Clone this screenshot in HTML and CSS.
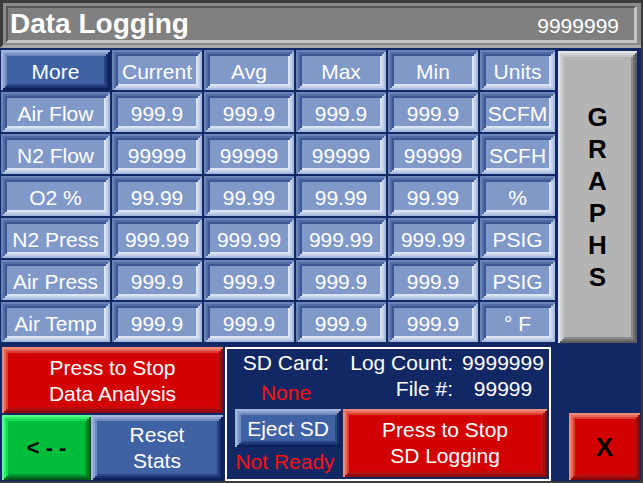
FILE: index.html
```html
<!DOCTYPE html>
<html lang="en">
<head>
<meta charset="utf-8">
<title>Data Logging</title>
<link rel="stylesheet" href="styles.css">
</head>
<body>
<div class="screen">
  <header class="titlebar">
    <div class="title-inner">
      <span class="title">Data Logging</span>
      <span class="title-num">9999999</span>
    </div>
  </header>

  <main class="main">
    <div class="grid">
      <div class="cell btn-blue">More</div>
      <div class="cell data">Current</div>
      <div class="cell data">Avg</div>
      <div class="cell data">Max</div>
      <div class="cell data">Min</div>
      <div class="cell data">Units</div>

      <div class="cell data">Air Flow</div>
      <div class="cell data">999.9</div>
      <div class="cell data">999.9</div>
      <div class="cell data">999.9</div>
      <div class="cell data">999.9</div>
      <div class="cell data">SCFM</div>

      <div class="cell data">N2 Flow</div>
      <div class="cell data">99999</div>
      <div class="cell data">99999</div>
      <div class="cell data">99999</div>
      <div class="cell data">99999</div>
      <div class="cell data">SCFH</div>

      <div class="cell data">O2 %</div>
      <div class="cell data">99.99</div>
      <div class="cell data">99.99</div>
      <div class="cell data">99.99</div>
      <div class="cell data">99.99</div>
      <div class="cell data">%</div>

      <div class="cell data">N2 Press</div>
      <div class="cell data">999.99</div>
      <div class="cell data">999.99</div>
      <div class="cell data">999.99</div>
      <div class="cell data">999.99</div>
      <div class="cell data">PSIG</div>

      <div class="cell data">Air Press</div>
      <div class="cell data">999.9</div>
      <div class="cell data">999.9</div>
      <div class="cell data">999.9</div>
      <div class="cell data">999.9</div>
      <div class="cell data">PSIG</div>

      <div class="cell data">Air Temp</div>
      <div class="cell data">999.9</div>
      <div class="cell data">999.9</div>
      <div class="cell data">999.9</div>
      <div class="cell data">999.9</div>
      <div class="cell data">° F</div>
    </div>

    <div class="graphs btn-gray">
      <span>G</span><span>R</span><span>A</span><span>P</span><span>H</span><span>S</span>
    </div>
  </main>

  <section class="bottom">
    <div class="left-block">
      <div class="btn btn-red analysis">Press to Stop<br>Data Analysis</div>
      <div class="left-row">
        <div class="btn btn-green back">&lt; - -</div>
        <div class="btn btn-blue reset">Reset<br>Stats</div>
      </div>
    </div>

    <div class="sd-panel">
      <div class="sd-top">
        <span class="sd-a">SD Card:</span>
        <span class="sd-k">Log Count:</span>
        <span class="sd-v">9999999</span>
        <span class="sd-a red none">None</span>
        <span class="sd-k">File #:</span>
        <span class="sd-v">99999</span>
      </div>
      <div class="sd-bottom">
        <div class="sd-left">
          <div class="btn btn-blue eject">Eject SD</div>
          <div class="red notready">Not Ready</div>
        </div>
        <div class="btn btn-red sdlog">Press to Stop<br>SD Logging</div>
      </div>
    </div>

    <div class="btn btn-red close">X</div>
  </section>
</div>
</body>
</html>
```

FILE: styles.css
```css
html, body {
  margin: 0;
  padding: 0;
}

body {
  background: #122864;
  width: 643px;
  height: 483px;
  overflow: hidden;
}

.screen {
  width: 643px;
  height: 483px;
  box-sizing: border-box;
  border-right: 2px solid #3b3b3b;
  border-bottom: 2px solid #3b3b3b;
  display: flex;
  flex-direction: column;
  font-family: "Liberation Sans", Arial, sans-serif;
  font-size: 21px;
  color: #ffffff;
}

/* ---------- title bar ---------- */
.titlebar {
  height: 48px;
  box-sizing: border-box;
  background: #8a8a8a;
  border-top: 3px solid #3b3b3b;
  border-left: 3px solid #3b3b3b;
  border-bottom: 3px solid #a9a9a9;
  padding: 3px 4px 2px 3px;
}

.title-inner {
  height: 37px;
  box-sizing: border-box;
  background: #808080;
  border-top: 2px solid #585858;
  border-left: 2px solid #585858;
  border-bottom: 3px solid #c6c6c6;
  border-right: 3px solid #c6c6c6;
  padding: 0 15px 0 2px;
  display: flex;
  align-items: baseline;
  justify-content: space-between;
  line-height: 32px;
}

.title {
  font-weight: bold;
  font-size: 28px;
}

.title-num {
  font-size: 21px;
}

/* ---------- main grid ---------- */
.main {
  display: flex;
  height: 295px;
  box-sizing: border-box;
  padding: 2px 0 0 1px;
}

.grid {
  display: grid;
  grid-template-columns: 109px 90px 90px 90px 90px 75px;
  grid-template-rows: repeat(7, 40px);
  gap: 2px;
}

.cell {
  display: flex;
  align-items: center;
  justify-content: center;
  box-sizing: border-box;
  padding-top: 3px;
  white-space: nowrap;
  line-height: 26px;
}

/* inset light-blue data cell */
.data {
  background: #8099c9;
  box-shadow:
    inset 2px 2px 0 #6a84ba,
    inset -2px -2px 0 #a9bbdf,
    inset 4px 4px 0 #526ca6,
    inset -4px -4px 0 #c3d1ec,
    inset 6px 6px 0 #3c5794,
    inset -6px -6px 0 #dbe4f5;
}

/* generic bevelled buttons */
.btn {
  display: flex;
  align-items: center;
  justify-content: center;
  text-align: center;
  box-sizing: border-box;
  line-height: 26px;
  white-space: nowrap;
}

.btn-blue {
  background: #3f62a4;
  box-shadow:
    inset 2px 2px 0 #a3b6dd,
    inset -2px -2px 0 #0e2058,
    inset 4px 4px 0 #8aa1cf,
    inset -4px -4px 0 #1b3170,
    inset 6px 6px 0 #6d88bf,
    inset -6px -6px 0 #2a4586;
}

.btn-red {
  background: #d20000;
  box-shadow:
    inset 2px 2px 0 #f08a78,
    inset -2px -2px 0 #8a0808,
    inset 4px 4px 0 #e8685a,
    inset -4px -4px 0 #a40c0c,
    inset 6px 6px 0 #dc3c34,
    inset -6px -6px 0 #bc1010;
}

.btn-green {
  background: #00be3c;
  box-shadow:
    inset 2px 2px 0 #5cff8c,
    inset -2px -2px 0 #005a18,
    inset 4px 4px 0 #2cf06a,
    inset -4px -4px 0 #007a22,
    inset 6px 6px 0 #10dc52,
    inset -6px -6px 0 #009a2e;
}

.btn-gray {
  background: #b4b4b4;
  box-shadow:
    inset 2px 2px 0 #e2e2e2,
    inset -2px -2px 0 #5c5c5c,
    inset 4px 4px 0 #d2d2d2,
    inset -4px -4px 0 #727272,
    inset 6px 6px 0 #c4c4c4,
    inset -6px -6px 0 #8c8c8c;
}

.graphs {
  margin: 1px 0 0 3px;
  width: 79px;
  height: 292px;
  display: flex;
  flex-direction: column;
  align-items: center;
  justify-content: center;
  font-weight: bold;
  font-size: 26px;
  line-height: 32px;
  color: #000000;
}

/* ---------- bottom area ---------- */
.bottom {
  display: flex;
  margin-top: 4px;
  height: 134px;
}

.left-block {
  margin-left: 2px;
  width: 221px;
  display: flex;
  flex-direction: column;
  gap: 2px;
}

.analysis {
  height: 66px;
  padding-top: 2px;
}

.left-row {
  display: flex;
  height: 65px;
}

.back {
  width: 89px;
  color: #000000;
  font-weight: bold;
  font-size: 22px;
}

.reset {
  width: 132px;
  padding-top: 1px;
}

.sd-panel {
  margin-left: 2px;
  width: 326px;
  height: 134px;
  box-sizing: border-box;
  border: 2px solid #ffffff;
  display: flex;
  flex-direction: column;
}

.sd-top {
  height: 60px;
  box-sizing: border-box;
  padding-top: 1px;
  display: grid;
  grid-template-columns: 118px 112px 92px;
  grid-auto-rows: 26px;
  line-height: 26px;
  white-space: nowrap;
}

.sd-a {
  text-align: center;
}

.sd-k {
  text-align: right;
  padding-right: 4px;
}

.sd-v {
  text-align: center;
}

.red {
  color: #ff1010;
}

.none {
  padding-top: 4px;
}

.sd-bottom {
  display: flex;
  height: 70px;
}

.sd-left {
  width: 116px;
  display: flex;
  flex-direction: column;
}

.eject {
  margin-left: 8px;
  width: 106px;
  height: 38px;
  padding-top: 2px;
}

.notready {
  margin-top: 2px;
  text-align: center;
  line-height: 26px;
  white-space: nowrap;
}

.sdlog {
  width: 204px;
  height: 68px;
}

.close {
  margin: 66px 1px 0 auto;
  width: 71px;
  height: 67px;
  color: #000000;
  font-weight: bold;
  font-size: 26px;
}
```
